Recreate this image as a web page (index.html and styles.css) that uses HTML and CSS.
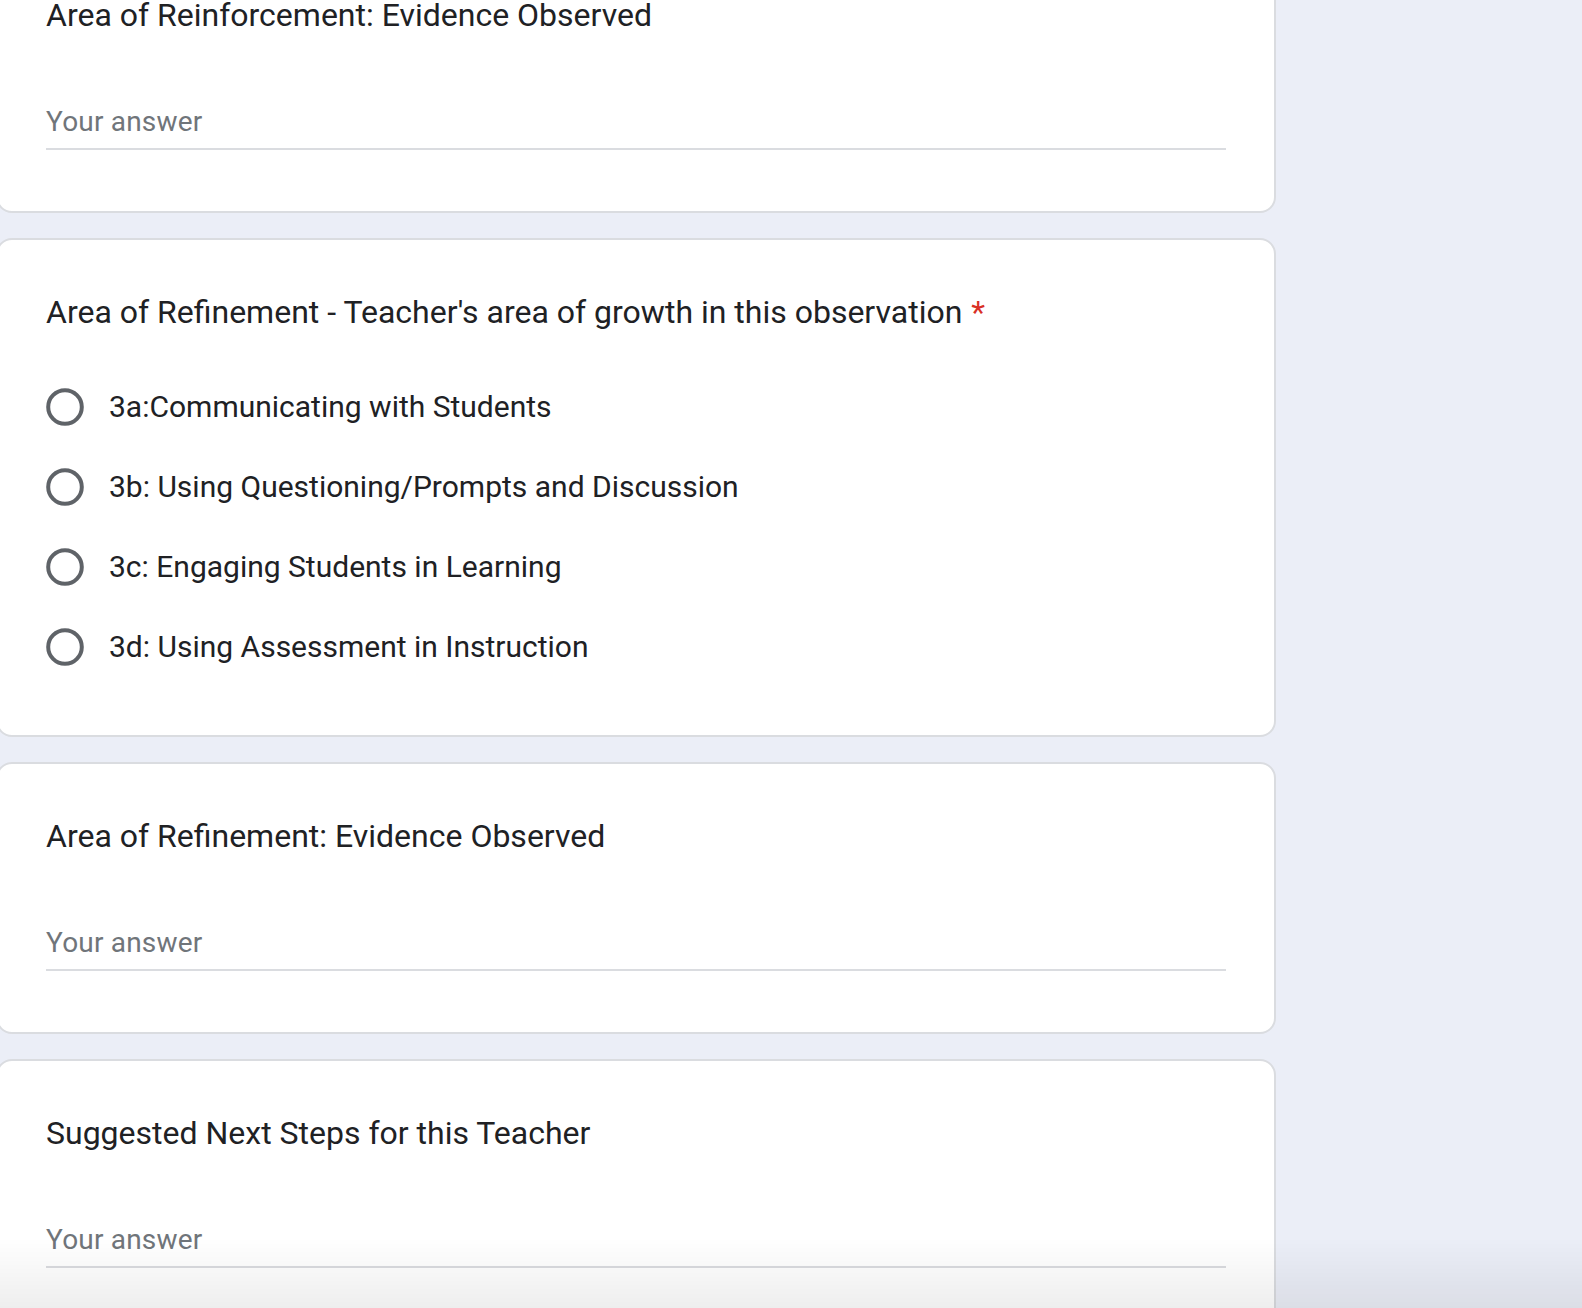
FILE: index.html
```html
<!DOCTYPE html>
<html lang="en">
<head>
<meta charset="utf-8">
<title>Observation Form</title>
<link rel="stylesheet" href="styles.css">
</head>
<body>
<main class="form">
  <section class="card">
    <div class="q-title">Area of Reinforcement: Evidence Observed</div>
    <div class="answer"><span class="placeholder">Your answer</span></div>
  </section>

  <section class="card">
    <div class="q-title">Area of Refinement - Teacher's area of growth in this observation<span class="req">*</span></div>
    <div class="options">
      <div class="option">
        <svg class="radio" viewBox="0 0 38 38" width="38" height="38"><circle cx="19" cy="19" r="16.8" fill="none" stroke="#5f6368" stroke-width="4"/></svg>
        <span class="opt-label">3a:Communicating with Students</span>
      </div>
      <div class="option">
        <svg class="radio" viewBox="0 0 38 38" width="38" height="38"><circle cx="19" cy="19" r="16.8" fill="none" stroke="#5f6368" stroke-width="4"/></svg>
        <span class="opt-label">3b: Using Questioning/Prompts and Discussion</span>
      </div>
      <div class="option">
        <svg class="radio" viewBox="0 0 38 38" width="38" height="38"><circle cx="19" cy="19" r="16.8" fill="none" stroke="#5f6368" stroke-width="4"/></svg>
        <span class="opt-label">3c: Engaging Students in Learning</span>
      </div>
      <div class="option">
        <svg class="radio" viewBox="0 0 38 38" width="38" height="38"><circle cx="19" cy="19" r="16.8" fill="none" stroke="#5f6368" stroke-width="4"/></svg>
        <span class="opt-label">3d: Using Assessment in Instruction</span>
      </div>
    </div>
  </section>

  <section class="card">
    <div class="q-title">Area of Refinement: Evidence Observed</div>
    <div class="answer"><span class="placeholder">Your answer</span></div>
  </section>

  <section class="card">
    <div class="q-title">Suggested Next Steps for this Teacher</div>
    <div class="answer"><span class="placeholder">Your answer</span></div>
  </section>
</main>
<div class="bottom-fade"></div>
</body>
</html>
```

FILE: styles.css
```css
html, body {
  margin: 0;
  padding: 0;
}
body {
  background: #ebeef7;
  font-family: Roboto, "Liberation Sans", Arial, sans-serif;
  color: #202124;
  overflow: hidden;
  height: 1308px;
}
.form {
  box-sizing: border-box;
  width: 1280px;
  margin: -59px 0 0 -4px;
  display: flex;
  flex-direction: column;
  gap: 25px;
}
.card {
  box-sizing: border-box;
  background: #fff;
  border: 2px solid #dadce0;
  border-radius: 16px;
  padding: 48px 48px 48px 48px;
}
.q-title {
  font-size: 32px;
  line-height: 48px;
  font-weight: 400;
  letter-spacing: 0;
  color: #202124;
}
.req {
  color: #d93025;
  padding-left: 9px;
}
.answer {
  margin-top: 59px;
  margin-bottom: 13px;
  padding-bottom: 2px;
  border-bottom: 2px solid #dadce0;
  font-size: 28px;
  line-height: 48px;
}
.placeholder {
  color: #70757a;
  letter-spacing: 0.2px;
}
.options {
  margin-top: 31px;
  display: flex;
  flex-direction: column;
}
.option {
  height: 80px;
  display: flex;
  align-items: center;
  gap: 25px;
}
.radio {
  flex: none;
  display: block;
}
.opt-label {
  font-size: 30px;
  line-height: 40px;
  color: #202124;
  letter-spacing: 0;
}
.bottom-fade {
  position: fixed;
  left: 0;
  right: 0;
  bottom: 0;
  height: 70px;
  background: linear-gradient(to bottom, rgba(0,0,0,0), rgba(0,0,0,0.065));
  pointer-events: none;
}
```
